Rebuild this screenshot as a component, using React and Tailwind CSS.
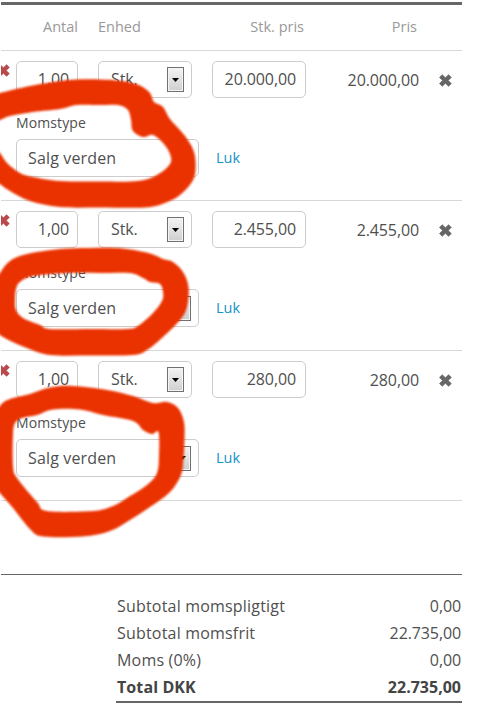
import React from "react";

const lines = [
  { qty: "1,00", unit: "Stk.", price: "20.000,00", total: "20.000,00" },
  { qty: "1,00", unit: "Stk.", price: "2.455,00", total: "2.455,00" },
  { qty: "1,00", unit: "Stk.", price: "280,00", total: "280,00" },
];

const totals = [
  { label: "Subtotal momspligtigt", value: "0,00" },
  { label: "Subtotal momsfrit", value: "22.735,00" },
  { label: "Moms (0%)", value: "0,00" },
];

// Hand-drawn marker rings: each has an outer and an inner contour.
const rings = [
  {
    outer: [[-12,97],[0,93],[30,86],[60,81],[78,79.5],[100,79.5],[118,80.5],[130,82.5],[141,86],[150,93],[154,102],[163,107],[170,119],[185,136],[194,152],[195.5,170],[192,182],[180,195],[165,203],[145,207.5],[100,207.5],[60,207],[30,201],[10,191],[0,184],[-12,175]],
    inner: [[-12,125],[0,120],[10,116],[33,112],[60,109],[77,105],[100,105],[118,105],[128,110],[131,120],[133,131],[143,137],[153,135],[163,143],[170,154],[170,164],[157,175],[138,181],[100,181.5],[60,181],[33,177],[20,173],[7,163],[0,153],[-12,140]],
  },
  {
    outer: [[-10,290],[0,273],[10,261],[27,254],[60,249],[90,248],[123,248.5],[150,253.5],[163,259],[173,262],[183,272],[188.5,287],[187,307],[180,320],[163,337],[147,350],[133,355],[90,355.5],[50,355],[27,348],[0,335],[-10,320]],
    inner: [[15,300],[16,289],[20,282],[33,276],[67,273],[100,273],[130,273],[143,278],[150,282],[160,284],[163,292],[162,301],[153,313],[138,326],[127,329],[90,329],[50,329],[40,325],[23,318],[16,310]],
  },
  {
    outer: [[-10,425],[0,406],[10,399],[30,394],[50,387.5],[73,386],[107,390],[133,396],[153,403],[167,402],[178,408],[184,422],[184.5,440],[183.5,458],[181,475],[170,492],[150,507],[130,520],[110,531],[83,536.5],[43,536.5],[30,529],[13,508],[0,493],[-10,480]],
    inner: [[13,435],[15,423],[22,418],[37,415],[53,409.5],[80,409.5],[103,415],[133,421],[143,430],[152,434],[158.5,432],[159,455],[157,473],[147,485],[127,498],[113,506],[93,511],[47,511],[37,502],[17,478],[13,466]],
  },
];

// Smooth closed curve through the points.
function smooth(p) {
  const n = p.length;
  let d = `M${p[0][0]} ${p[0][1]}`;
  for (let i = 0; i < n; i++) {
    const a = p[(i - 1 + n) % n];
    const b = p[i];
    const c = p[(i + 1) % n];
    const e = p[(i + 2) % n];
    d += `C${b[0] + (c[0] - a[0]) / 6} ${b[1] + (c[1] - a[1]) / 6} ${c[0] - (e[0] - b[0]) / 6} ${c[1] - (e[1] - b[1]) / 6} ${c[0]} ${c[1]}`;
  }
  return d + "Z";
}

function Cross({ className }) {
  return (
    <svg viewBox="0 0 13 13" className={className} fill="currentColor">
      <path d="M3.2 0.7 6.4 3.7 9.6 0.7 12.3 3.4 9.2 6.5 12.3 9.6 9.6 12.3 6.4 9.3 3.2 12.3 0.5 9.6 3.6 6.5 0.5 3.4Z" stroke="currentColor" strokeWidth=".7" strokeLinejoin="round" />
    </svg>
  );
}

function DropButton() {
  return (
    <span className="flex h-[25px] w-[17px] items-center justify-center border border-[#707070] bg-linear-to-b from-[#f3f3f3] to-[#cfcfcf] shadow-[inset_0_0_0_1px_#f5f5f5]">
      <svg viewBox="0 0 7 4" className="h-1 w-[7px]">
        <path d="M0 0H7L3.5 4Z" />
      </svg>
    </span>
  );
}

function Line({ line }) {
  return (
    <div className="h-[150px] border-b border-[#d8d8d8] pt-[10px]">
      <div className="flex h-[37px] tracking-[-0.11px]">
        <div className="flex w-[15px] overflow-hidden pt-[3px]">
          <Cross className="-ml-1 h-[13px] w-[13px] shrink-0 text-[#b9494b]" />
        </div>
        <div className="flex w-[62px] items-center justify-end rounded-[5px] border border-[#ccc] pr-2 pb-0.5">{line.qty}</div>
        <div className="ml-5 flex w-[94px] items-center justify-between rounded-[5px] border border-[#ccc] pr-[7px] pl-3">
          <span className="pb-0.5">{line.unit}</span>
          <DropButton />
        </div>
        <div className="ml-5 flex w-[94px] items-center justify-end rounded-[5px] border border-[#ccc] pr-[9px] pb-0.5">{line.price}</div>
        <div className="flex w-[113px] items-center justify-end">{line.total}</div>
        <div className="flex items-center pt-0.5 pl-5">
          <Cross className="h-[13px] w-[13px] text-[#666]" />
        </div>
      </div>
      <div className="mt-[14px] ml-[15px] h-[21px] text-[14px] leading-[21px] tracking-[0.1px]">Momstype</div>
      <div className="mt-[6px] ml-[15px] flex h-[38px]">
        <div className="flex w-[183px] items-center justify-between rounded-[5px] border border-[#ccc] pr-[7px] pl-[11px]">
          <span className="tracking-[0.15px]">Salg verden</span>
          <DropButton />
        </div>
        <span className="ml-[17px] self-center text-[14.5px] text-[#1592c7]">Luk</span>
      </div>
    </div>
  );
}

export default function App() {
  return (
    <div className="relative h-[721px] w-[499px] overflow-hidden bg-white pt-[2px] pl-px font-['Open_Sans',sans-serif] text-[16px] leading-6 text-[#4f4f4f]">
      <div className="w-[461px]">
        <div className="flex h-[49px] items-center border-t-[3px] border-b border-t-[#666] border-b-[#d8d8d8] pb-0.5 text-[14.5px] text-[#999]">
          <span className="w-[77px] text-right">Antal</span>
          <span className="ml-5 w-[94px]">Enhed</span>
          <span className="ml-5 w-[92px] text-right">Stk. pris</span>
          <span className="w-[113px] text-right">Pris</span>
        </div>
        {lines.map((line) => (
          <Line key={line.price} line={line} />
        ))}
        <div className="mt-[73px] border-t border-[#666] pt-[17px]">
          <div className="ml-[115px] border-b-2 border-[#666] pb-px">
            {totals.map((t) => (
              <div key={t.label} className="flex h-[27px] items-center justify-between px-px">
                <span className="tracking-[0.19px]">{t.label}</span>
                <span className="tracking-[-0.11px]">{t.value}</span>
              </div>
            ))}
            <div className="flex h-[27px] items-center justify-between px-px font-bold text-[#444]">
              <span className="tracking-[0.1px]">Total DKK</span>
              <span>22.735,00</span>
            </div>
          </div>
        </div>
      </div>
      <svg viewBox="0 0 499 721" className="pointer-events-none absolute inset-0 h-[721px] w-[499px] overflow-visible blur-[0.8px]">
        {rings.map((r, i) => (
          <path key={i} d={smooth(r.outer) + smooth(r.inner)} fill="#ea3200" fillRule="evenodd" />
        ))}
      </svg>
    </div>
  );
}
